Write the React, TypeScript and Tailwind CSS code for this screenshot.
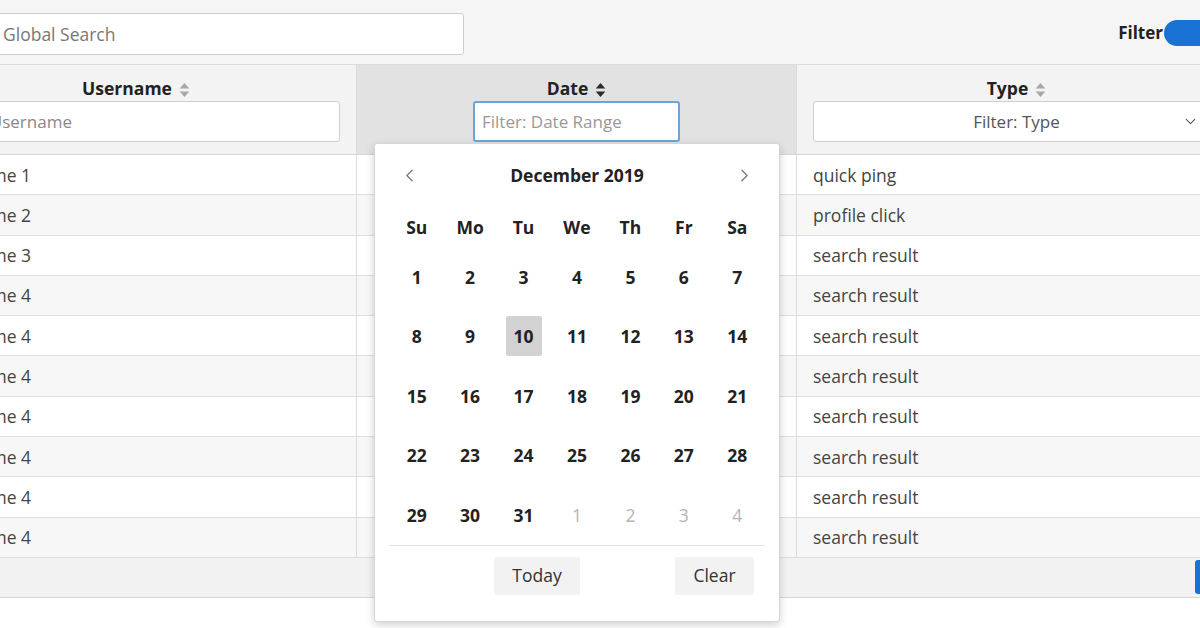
import { ChevronLeft, ChevronRight, ChevronDown } from "lucide-react";

const TYPES = [
  "quick ping", "profile click", "search result", "search result", "search result",
  "search result", "search result", "search result", "search result", "search result",
];
const USERS = [1, 2, 3, 4, 4, 4, 4, 4, 4, 4];
const WEEKDAYS = ["Su", "Mo", "Tu", "We", "Th", "Fr", "Sa"];

// December 2019 starts on a Sunday
const DAYS: { n: number; muted?: boolean }[] = [
  ...Array.from({ length: 31 }, (_, i) => ({ n: i + 1 })),
  { n: 1, muted: true }, { n: 2, muted: true }, { n: 3, muted: true }, { n: 4, muted: true },
];

function SortIcon({ active }: { active?: boolean }) {
  const c = active ? "#2b2b2b" : "#a8a8a8";
  return (
    <svg width="11" height="16" viewBox="0 0 10 15" className="ml-[7px] mt-[2px]">
      <path d="M5 1 L9.5 6 H0.5 Z" fill={c} />
      <path d="M5 14 L9.5 9 H0.5 Z" fill={c} />
    </svg>
  );
}

function HeaderCell({ title, active, children }: { title: string; active?: boolean; children: React.ReactNode }) {
  return (
    <div className={`flex flex-col items-stretch px-4 pt-[11px] ${active ? "bg-[#e2e2e2]" : "bg-[#f3f3f3]"} border-r border-[#dcdcdc]`}>
      <div className="h-[25px] flex items-center justify-center text-[17.5px] font-bold text-[#222]">
        {title}
        <SortIcon active={active} />
      </div>
      {children}
    </div>
  );
}

function Calendar() {
  return (
    <div className="absolute left-[374px] top-[143px] w-[406px] h-[479px] bg-white border border-[#d6d6d6] rounded-[3px] shadow-[0_3px_8px_rgba(0,0,0,0.18)] z-10">
      <div className="mt-[17px] h-[28px] flex items-center justify-between px-[24px]">
        <ChevronLeft size={21} strokeWidth={1.5} className="text-[#777]" />
        <span className="text-[17.5px] font-bold text-[#222]">December 2019</span>
        <ChevronRight size={21} strokeWidth={1.5} className="text-[#777]" />
      </div>

      <div className="mx-[15px] mt-[18px] grid grid-cols-7">
        {WEEKDAYS.map(d => (
          <div key={d} className="h-[40px] flex items-center justify-center text-[17.5px] font-bold text-[#222]">{d}</div>
        ))}
        {DAYS.map((d, i) => (
          <div key={i} className="h-[59.5px] flex items-center justify-center">
            <span
              className={`w-[36px] h-[40px] flex items-center justify-center text-[17.5px]
                ${d.muted ? "text-[#b4b4b4] font-normal" : "text-[#222] font-bold"}
                ${!d.muted && d.n === 10 ? "bg-[#d2d2d2] rounded-[2px]" : ""}`}
            >
              {d.n}
            </span>
          </div>
        ))}
      </div>

      <div className="mx-[14px] border-t border-[#e3e3e3]" />

      <div className="mt-[11px] flex justify-between pl-[119px] pr-[25px]">
        <button className="w-[86px] h-[38px] bg-[#f2f2f2] rounded-[2px] text-[17.5px] text-[#333]">Today</button>
        <button className="w-[79px] h-[38px] bg-[#f2f2f2] rounded-[2px] text-[17.5px] text-[#333]">Clear</button>
      </div>
    </div>
  );
}

export default function App() {
  return (
    <div className="relative w-[1200px] h-[628px] overflow-hidden bg-[#f5f5f5] font-['Open_Sans','Liberation_Sans',sans-serif]">

      {/* ── Top bar ── */}
      <div className="h-[64px] flex items-start pt-[13px]">
        <div className="-ml-[12px] w-[476px] h-[42px] bg-white border border-[#cfcfcf] rounded-[3px] flex items-center pl-[14px] text-[17.5px] text-[#777]">
          Global Search
        </div>
        <div className="flex-1" />
        <div className="flex items-center mt-[7px] -mr-[30px]">
          <span className="text-[17px] font-bold text-[#222] mr-[1px]">Filter</span>
          <div className="w-[66px] h-[26px] rounded-full bg-[#1a73d4] flex items-center justify-end pr-[3px]">
            <div className="w-[20px] h-[20px] rounded-full bg-white" />
          </div>
        </div>
      </div>

      {/* ── Table ── */}
      <div className="-ml-[84px] w-[1321px] border-t border-[#dcdcdc]">
        <div className="grid grid-cols-[441px_440px_440px] h-[90px] border-b border-[#d6d6d6]">
          <HeaderCell title="Username">
            <div className="h-[41px] bg-white border border-[#cfcfcf] rounded-[3px] flex items-center pl-[8px] text-[17px] text-[#888]">
              Filter: Username
            </div>
          </HeaderCell>
          <HeaderCell title="Date" active>
            <div className="self-center w-[207px] h-[41px] bg-white border-2 border-[#6aa5d8] rounded-[3px] flex items-center pl-[7px] text-[17px] text-[#999]">
              Filter: Date Range
            </div>
          </HeaderCell>
          <HeaderCell title="Type">
            <div className="relative h-[41px] bg-white border border-[#cfcfcf] rounded-[3px] flex items-center justify-center text-[17px] text-[#555]">
              Filter: Type
              <ChevronDown size={17} strokeWidth={1.5} className="absolute right-[20px] top-[11px] text-[#555]" />
            </div>
          </HeaderCell>
        </div>

        {TYPES.map((t, i) => (
          <div
            key={i}
            className={`grid grid-cols-[441px_440px_440px] h-[40.3px] border-b border-[#dedede] text-[17.5px] text-[#444]
              ${i % 2 === 1 ? "bg-[#f7f7f7]" : "bg-white"}`}
          >
            <div className="flex items-center px-4 border-r border-[#dcdcdc]">Username {USERS[i]}</div>
            <div className="border-r border-[#dcdcdc]" />
            <div className="flex items-center px-4">{t}</div>
          </div>
        ))}

        {/* Footer bar — pagination button cut off at the right edge */}
        <div className="h-[40px] bg-[#f2f2f2] border-b border-[#d6d6d6] flex items-center justify-end pr-[16px]">
          <div className="w-[26px] h-[34px] bg-[#1a73d4] rounded-l-[3px]" />
        </div>
      </div>

      <div className="h-full bg-white" />

      <Calendar />
    </div>
  );
}
